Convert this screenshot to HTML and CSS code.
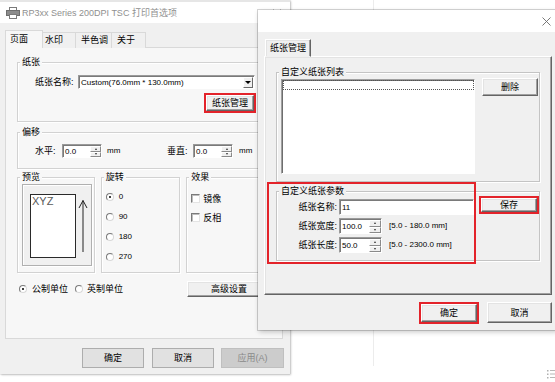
FILE: index.html
```html
<!DOCTYPE html>
<html lang="zh-CN">
<head>
<meta charset="utf-8">
<title>RP3xx Series 200DPI TSC 打印首选项</title>
<link rel="stylesheet" href="styles.css">
</head>
<body>
<div class="bgline"></div>

<div class="win main">
  <div class="titlebar">
    <svg class="picon" viewBox="0 0 14 12" width="14" height="12">
      <rect x="3.5" y="0.5" width="7" height="3" fill="#fff" stroke="#7a7a7a"/>
      <rect x="0.5" y="3.5" width="13" height="5" fill="#8c8c8c" stroke="#6e6e6e"/>
      <rect x="3.5" y="7.5" width="7" height="4" fill="#fff" stroke="#7a7a7a"/>
    </svg>
    <span class="ttl">RP3xx Series 200DPI TSC 打印首选项</span>
    <svg class="mclose" viewBox="0 0 8 8" width="8" height="8"><path d="M0.5 0.5L7.5 7.5M7.5 0.5L0.5 7.5" stroke="#9a9a9a" stroke-width="1"/></svg>
  </div>

  <div class="tabs">
    <div class="tab sel t1">页面</div>
    <div class="tab t2">水印</div>
    <div class="tab t3">半色调</div>
    <div class="tab t4">关于</div>
  </div>

  <div class="panel">
    <div class="g g-paper">
      <span class="glabel">纸张</span>
      <div class="r1">
        <span class="lbl-name">纸张名称:</span>
        <div class="combo">
          <span class="ctext">Custom(76.0mm * 130.0mm)</span>
          <span class="cbtn"><i class="tri"></i></span>
        </div>
      </div>
      <div class="r2">
        <div class="redbox rb-mgr"><div class="btn classic">纸张管理</div></div>
      </div>
    </div>

    <div class="g g-off">
      <span class="glabel">偏移</span>
      <div class="r-off">
        <span class="lbl-h">水平:</span>
        <div class="inp inp-s"><span class="val">0.0</span><span class="spin"><i class="up"></i><i class="dn"></i></span></div>
        <span class="unit u1">mm</span>
        <span class="lbl-v">垂直:</span>
        <div class="inp inp-s"><span class="val">0.0</span><span class="spin"><i class="up"></i><i class="dn"></i></span></div>
        <span class="unit u2">mm</span>
      </div>
    </div>

    <div class="grow">
      <div class="g g-prev">
        <span class="glabel">预览</span>
        <div class="frame">
          <div class="paper">XYZ</div>
          <svg class="arrow" viewBox="0 0 10 56" width="10" height="56">
            <path d="M5 2.5V54" stroke="#222" stroke-width="1" fill="none"/>
            <path d="M1 10L5 2.5L9 10" stroke="#222" stroke-width="1" fill="none"/>
          </svg>
        </div>
      </div>
      <div class="g g-rot">
        <span class="glabel">旋转</span>
        <div class="radios">
          <div class="ropt"><span class="radio on"></span><span class="num">0</span></div>
          <div class="ropt"><span class="radio"></span><span class="num">90</span></div>
          <div class="ropt"><span class="radio"></span><span class="num">180</span></div>
          <div class="ropt"><span class="radio"></span><span class="num">270</span></div>
        </div>
      </div>
      <div class="g g-eff">
        <span class="glabel">效果</span>
        <div class="checks">
          <div class="copt"><span class="chk"></span><span>镜像</span></div>
          <div class="copt"><span class="chk"></span><span>反相</span></div>
        </div>
      </div>
    </div>

    <div class="urow">
      <span class="radio on ur1"></span><span class="utext">公制单位</span>
      <span class="radio ur2"></span><span class="utext">英制单位</span>
      <div class="btn classic adv">高级设置</div>
    </div>
  </div>

  <div class="mbtns">
    <div class="btn flat b-ok">确定</div>
    <div class="btn flat b-cancel">取消</div>
    <div class="btn disabled b-apply">应用(A)</div>
  </div>
</div>

<div class="win dlg">
  <div class="dtitle">
    <svg class="dclose" viewBox="0 0 9 9" width="9" height="9"><path d="M0.5 0.5L8.5 8.5M8.5 0.5L0.5 8.5" stroke="#6a6a6a" stroke-width="0.9"/></svg>
  </div>
  <div class="dtabs">
    <div class="dtab">纸张管理</div>
  </div>
  <div class="dpanel">
    <div class="g g2 g-list">
      <span class="glabel">自定义纸张列表</span>
      <div class="lrow">
        <div class="listbox"><div class="focusrow"></div></div>
        <div class="btn classic b-del">删除</div>
      </div>
    </div>
    <div class="g g2 g-par">
      <span class="glabel">自定义纸张参数</span>
      <div class="prow p1">
        <span class="plbl">纸张名称:</span>
        <div class="inp inp-name"><span class="val">11</span></div>
        <div class="redbox rb-save"><div class="btn classic">保存</div></div>
      </div>
      <div class="prow p2">
        <span class="plbl">纸张宽度:</span>
        <div class="inp inp-num"><span class="val">100.0</span><span class="spin"><i class="up"></i><i class="dn"></i></span></div>
        <span class="range">[5.0 - 180.0 mm]</span>
      </div>
      <div class="prow p3">
        <span class="plbl">纸张长度:</span>
        <div class="inp inp-num"><span class="val">50.0</span><span class="spin"><i class="up"></i><i class="dn"></i></span></div>
        <span class="range">[5.0 - 2300.0 mm]</span>
      </div>
    </div>
  </div>
  <div class="dbtns">
    <div class="redbox rb-ok"><div class="btn classic">确定</div></div>
    <div class="btn classic b-dcancel">取消</div>
  </div>
  <div class="anno"></div>
</div>

<svg class="cornericon" viewBox="0 0 8 10" width="8" height="10">
  <rect x="0" y="1" width="1.5" height="1.5" fill="#b0b0b0"/>
  <rect x="0" y="4.5" width="1.5" height="1.5" fill="#b0b0b0"/>
  <rect x="0" y="8" width="1.5" height="1.5" fill="#b0b0b0"/>
  <rect x="3" y="1" width="5" height="1" fill="#b8b8b8"/>
  <rect x="3" y="4.5" width="5" height="1" fill="#b8b8b8"/>
  <rect x="3" y="8" width="5" height="1" fill="#b8b8b8"/>
</svg>
</body>
</html>
```

FILE: styles.css
```css
html, body {
  margin: 0;
  padding: 0;
}
body {
  width: 555px;
  height: 382px;
  position: relative;
  overflow: hidden;
  background: #fff;
  font-family: "Liberation Sans", "Noto Sans CJK SC", sans-serif;
  font-size: 9px;
  line-height: 12px;
  color: #000;
}

.bgline {
  position: absolute;
  left: 373px;
  top: 0;
  width: 1px;
  height: 366px;
  background: #ececec;
}

.win {
  position: absolute;
  box-sizing: border-box;
  background: #f0f0f0;
}

/* ---------- main window ---------- */
.main {
  left: 0;
  top: 0;
  width: 290px;
  height: 374px;
  box-shadow: 1px 1px 2px rgba(0, 0, 0, 0.22), 0 0 1px rgba(0, 0, 0, 0.3);
}
.titlebar {
  box-sizing: border-box;
  height: 23px;
  background: #fff;
  border-top: 2px solid #e6e6e6;
  display: flex;
  align-items: center;
  padding-left: 6px;
}
.picon {
  margin-right: 2px;
  flex: none;
}
.ttl {
  color: #8f8f8f;
  font-size: 9px;
  white-space: nowrap;
}
.mclose {
  margin-left: auto;
  margin-right: 9px;
  flex: none;
}

.tabs {
  display: flex;
  align-items: flex-end;
  height: 18px;
  margin: 7px 0 0 5px;
  position: relative;
  z-index: 1;
}
.tab {
  box-sizing: border-box;
  height: 16px;
  border: 1px solid #d9d9d9;
  border-bottom: none;
  background: #f0f0f0;
  line-height: 15px;
  margin-left: -1px;
  white-space: nowrap;
}
.tab.sel {
  height: 18px;
  background: #f7f7f7;
  line-height: 17px;
  margin-left: 0;
}
.t1 { width: 38px; padding-left: 4px; }
.t2 { width: 34px; padding-left: 2px; }
.t3 { width: 37px; padding-left: 5px; }
.t4 { width: 35px; padding-left: 5px; }

.panel {
  box-sizing: border-box;
  width: 278px;
  height: 292px;
  margin: -1px 0 0 5px;
  border: 1px solid #d9d9d9;
  background: #f7f7f7;
  padding: 14px 11px 0;
}

/* group boxes: the border line is the box top, the caption sits over it */
.g {
  position: relative;
  box-sizing: border-box;
  border: 1px solid #d2d2d2;
  box-shadow: inset 1px 1px 0 #fff, 1px 1px 0 #fff;
}
.glabel {
  position: absolute;
  left: 2px;
  top: -7px;
  padding: 0 2px;
  height: 12px;
  line-height: 12px;
  background: #f7f7f7;
  white-space: nowrap;
}
.g2 {
  border-color: #c4c4c4;
}
.g2 > .glabel {
  background: #f0f0f0;
}

.g-paper {
  width: 255px;
  height: 60px;
}
.r1 {
  display: flex;
  align-items: center;
  margin-top: 12px;
  padding-left: 17px;
  height: 14px;
}
.lbl-name {
  width: 43px;
  flex: none;
  white-space: nowrap;
}
.combo {
  box-sizing: border-box;
  width: 177px;
  height: 14px;
  display: flex;
  align-items: center;
  background: #fff;
  border: 1px solid;
  border-color: #9a9a9a #fff #fff #9a9a9a;
  box-shadow: inset 1px 1px 0 #7a7a7a;
  padding: 1px 1px 0 0;
}
.ctext {
  flex: 1;
  font-size: 8px;
  padding-left: 2px;
  white-space: nowrap;
}
.cbtn {
  box-sizing: border-box;
  width: 10px;
  height: 11px;
  background: #f0f0f0;
  border: 1px solid;
  border-color: #fff #6a6a6a #6a6a6a #fff;
  display: flex;
  align-items: center;
  justify-content: center;
}
.tri {
  width: 0;
  height: 0;
  border-left: 3px solid transparent;
  border-right: 3px solid transparent;
  border-top: 3px solid #000;
}
.r2 {
  margin-top: 4px;
  padding-left: 186px;
}

.redbox {
  box-sizing: border-box;
  border: 2px solid #e3232a;
  display: flex;
}
.redbox > .btn {
  flex: 1;
}
.rb-mgr {
  width: 52px;
  height: 20px;
}

.btn {
  box-sizing: border-box;
  display: flex;
  align-items: center;
  justify-content: center;
  white-space: nowrap;
  color: #000;
}
.btn.classic {
  background: #f0f0f0;
  border: 1px solid;
  border-color: #fff #646464 #646464 #fff;
  box-shadow: inset -1px -1px 0 #a0a0a0, inset 1px 1px 0 #e3e3e3;
}
.btn.flat {
  background: #e1e1e1;
  border: 1px solid #adadad;
}
.btn.disabled {
  background: #cccccc;
  border: 1px solid #bfbfbf;
  color: #8a8a8a;
}

.g-off {
  width: 255px;
  height: 37px;
  margin-top: 10px;
}
.r-off {
  display: flex;
  align-items: center;
  margin-top: 11px;
  height: 14px;
  padding-left: 17px;
}
.lbl-h { width: 27px; flex: none; white-space: nowrap; }
.lbl-v { width: 26px; flex: none; white-space: nowrap; }
.unit {
  font-size: 8px;
  flex: none;
}
.u1 { width: 60px; padding-left: 5px; }
.u2 { padding-left: 6px; }

.inp {
  box-sizing: border-box;
  display: flex;
  background: #fff;
  border: 1px solid;
  border-color: #9a9a9a #fff #fff #9a9a9a;
  box-shadow: inset 1px 1px 0 #7a7a7a;
  flex: none;
}
.inp .val {
  flex: 1;
  font-size: 8px;
  line-height: 12px;
  padding: 1px 0 0 2px;
  white-space: nowrap;
}
.inp-s {
  width: 40px;
  height: 14px;
}
.spin {
  width: 11px;
  display: flex;
  flex-direction: column;
  flex: none;
  padding-top: 1px;
}
.spin i {
  flex: 1;
  box-sizing: border-box;
  background: #f0f0f0;
  border: 1px solid;
  border-color: #fff #8a8a8a #8a8a8a #fff;
  display: flex;
  align-items: center;
  justify-content: center;
}
.spin i::after {
  content: "";
  width: 0;
  height: 0;
  border-left: 1.5px solid transparent;
  border-right: 1.5px solid transparent;
}
.spin i.up::after {
  border-bottom: 2px solid #333;
}
.spin i.dn::after {
  border-top: 2px solid #333;
}

.grow {
  display: flex;
  margin-top: 8px;
  height: 96px;
}
.g-prev {
  width: 78px;
  height: 96px;
  margin-right: 6px;
}
.g-rot {
  width: 80px;
  height: 96px;
  margin-right: 6px;
}
.g-eff {
  width: 85px;
  height: 96px;
}
.frame {
  box-sizing: border-box;
  width: 70px;
  height: 82px;
  margin: 6px 0 0 4px;
  border: 1px solid #b0b0b0;
  box-shadow: inset 1px 1px 0 #fff, 1px 1px 0 #fff;
  background: #f0f0f0;
  display: flex;
  align-items: flex-start;
  padding: 9px 0 0 7px;
}
.paper {
  box-sizing: border-box;
  width: 46px;
  height: 64px;
  border: 1px solid #2a2a2a;
  background: #fff;
  font-size: 11px;
  line-height: 12px;
  color: #5a5a5a;
  padding-left: 1px;
  flex: none;
}
.arrow {
  margin: 4px 0 0 2px;
  flex: none;
}

.radios {
  display: flex;
  flex-direction: column;
  margin-top: 9px;
  padding-left: 4px;
}
.ropt {
  height: 20px;
  display: flex;
  align-items: center;
}
.radio {
  box-sizing: border-box;
  width: 8px;
  height: 8px;
  border-radius: 50%;
  border: 1px solid;
  border-color: #7a7a7a #d8d8d8 #d8d8d8 #7a7a7a;
  background: #fff;
  display: flex;
  align-items: center;
  justify-content: center;
  flex: none;
}
.radio.on::after {
  content: "";
  width: 2px;
  height: 2px;
  border-radius: 50%;
  background: #000;
}
.ropt .radio {
  margin-right: 5px;
}
.num {
  font-size: 8px;
}

.checks {
  margin-top: 11px;
  padding-left: 4px;
}
.copt {
  height: 19px;
  display: flex;
  align-items: center;
}
.chk {
  box-sizing: border-box;
  width: 9px;
  height: 9px;
  border: 1px solid;
  border-color: #7a7a7a #e4e4e4 #e4e4e4 #7a7a7a;
  box-shadow: inset 1px 1px 0 #bdbdbd;
  background: #fff;
  margin-right: 3px;
  flex: none;
}

.urow {
  display: flex;
  align-items: center;
  margin-top: 7px;
  height: 17px;
}
.ur1 { margin-left: 2px; margin-right: 5px; }
.ur2 { margin-left: 7px; margin-right: 4px; }
.utext { white-space: nowrap; }
.adv {
  margin-left: 64px;
  width: 85px;
  height: 16px;
}

.mbtns {
  display: flex;
  justify-content: flex-end;
  margin-top: 9px;
  padding-right: 6px;
}
.mbtns .btn {
  height: 20px;
}
.b-ok { width: 62px; }
.b-cancel { width: 62px; margin-left: 8px; }
.b-apply { width: 63px; margin-left: 7px; }

/* ---------- paper manager dialog ---------- */
.dlg {
  left: 258px;
  top: 10px;
  width: 300px;
  height: 320px;
  box-shadow: 0 0 0 1px rgba(0, 0, 0, 0.16), 1px 2px 5px rgba(0, 0, 0, 0.22);
}
.dtitle {
  height: 22px;
  background: #fff;
  display: flex;
  justify-content: flex-end;
  align-items: center;
  padding-right: 7px;
}
.dtabs {
  display: flex;
  height: 18px;
  margin: 7px 0 0 7px;
  position: relative;
  z-index: 1;
}
.dtab {
  box-sizing: border-box;
  width: 46px;
  height: 18px;
  border: 1px solid;
  border-color: #fff #646464 transparent #fff;
  box-shadow: inset -1px 0 0 #a0a0a0, inset 1px 1px 0 #e3e3e3;
  background: #f0f0f0;
  padding-left: 4px;
  line-height: 17px;
  white-space: nowrap;
}
.dpanel {
  box-sizing: border-box;
  width: 288px;
  height: 239px;
  margin: -1px 0 0 6px;
  border: 1px solid;
  border-color: #fff #646464 #646464 #fff;
  box-shadow: inset -1px -1px 0 #a0a0a0, inset 1px 1px 0 #e3e3e3;
  background: #f0f0f0;
  padding: 15px 11px 0;
}
.g-list {
  width: 264px;
  height: 110px;
}
.lrow {
  display: flex;
  align-items: flex-start;
  margin-left: 4px;
  margin-top: 5px;
}
.listbox {
  box-sizing: border-box;
  width: 194px;
  height: 95px;
  margin-top: 1px;
  background: #fff;
  border: 1px solid;
  border-color: #a0a0a0 #fff #fff #a0a0a0;
  box-shadow: inset 1px 1px 0 #6e6e6e;
  padding: 0 0 0 1px;
}
.focusrow {
  box-sizing: border-box;
  height: 10px;
  border: 1px dotted #555;
}
.b-del {
  width: 56px;
  height: 18px;
  margin-left: 7px;
}

.g-par {
  width: 264px;
  height: 70px;
  margin-top: 9px;
}
.prow {
  display: flex;
  align-items: center;
  height: 16px;
}
.p1 { margin-top: 7px; }
.p2, .p3 { margin-top: 3px; }
.plbl {
  width: 60px;
  margin-right: 2px;
  text-align: right;
  white-space: nowrap;
  flex: none;
}
.inp-name {
  width: 135px;
  height: 16px;
}
.inp-name .val {
  line-height: 13px;
}
.inp-num {
  width: 43px;
  height: 16px;
}
.inp-num .spin {
  width: 12px;
}
.inp-num .val {
  line-height: 13px;
}
.range {
  font-size: 8px;
  margin-left: 7px;
  white-space: nowrap;
}
.rb-save {
  width: 60px;
  height: 18px;
  margin-left: 5px;
  align-self: flex-start;
  margin-top: -3px;
}

.dbtns {
  display: flex;
  justify-content: flex-end;
  align-items: flex-start;
  margin-top: 7px;
  padding-right: 6px;
}
.rb-ok {
  width: 60px;
  height: 22px;
}
.b-dcancel {
  width: 65px;
  height: 21px;
  margin-left: 8px;
}

.anno {
  position: absolute;
  left: 9px;
  top: 172px;
  width: 209px;
  height: 82px;
  box-sizing: border-box;
  border: 2px solid #e3232a;
  pointer-events: none;
}

.cornericon {
  position: absolute;
  left: 547px;
  top: 369px;
}
```
